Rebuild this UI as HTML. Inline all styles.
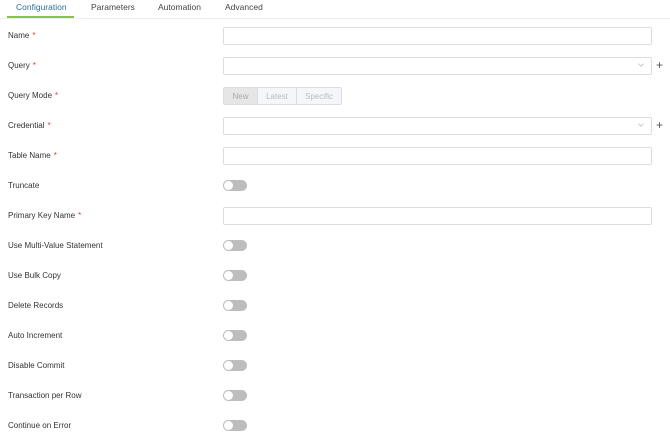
<!DOCTYPE html>
<html><head><style>
body{margin:0;width:670px;height:432px;background:#fff;font-family:"Liberation Sans",sans-serif;font-size:8px;color:#333;position:relative;overflow:hidden}
.tabs{position:absolute;left:0;top:0;width:670px;height:18px;border-bottom:1px solid #eee}
.tab{position:absolute;top:2px;font-size:8.5px;color:#444}
.ul{position:absolute;left:7px;top:16px;width:67px;height:2px;background:#8bc34a}
.lbl{position:absolute;left:8px;font-size:8px;color:#333}
.req{color:#e53935;margin-left:3px}
.inp{position:absolute;left:223px;width:427px;height:16px;border:1px solid #ddd;border-radius:2px}
.chev{position:absolute;right:8px;top:4px;width:3px;height:3px;border-right:1px solid #ccc;border-bottom:1px solid #ccc;transform:rotate(45deg)}
.plus{position:absolute;left:656px;font-size:12px;color:#555;line-height:12px}
.tg{position:absolute;left:223px;width:24px;height:11px;border-radius:6px;background:#bdbdbd}
.tg::after{content:"";position:absolute;left:1px;top:1px;width:9px;height:9px;border-radius:50%;background:#fff}
.seg{position:absolute;left:223px;top:87px;height:16px;border:1px solid #ddd;border-radius:2px;display:flex;font-size:8px;color:#bbb}
.seg div{display:flex;align-items:center;justify-content:center;border-right:1px solid #ddd;background:#f4f6f9}
</style></head><body>
<div class="tabs">
<div class="tab" style="left:16px;color:#2f6fa8">Configuration</div>
<div class="tab" style="left:91px">Parameters</div>
<div class="tab" style="left:158px">Automation</div>
<div class="tab" style="left:225px">Advanced</div>
<div class="ul"></div>
</div>
<div class="lbl" style="top:31px">Name<span class="req">*</span></div>
<div class="inp" style="top:27px"></div>
<div class="lbl" style="top:61px">Query<span class="req">*</span></div>
<div class="inp" style="top:57px"><div class="chev"></div></div><div class="plus" style="top:59px">+</div>
<div class="lbl" style="top:91px">Query Mode<span class="req">*</span></div>
<div class="seg"><div style="width:33px;background:#e6e6e6;color:#aaa">New</div><div style="width:38px">Latest</div><div style="width:44px;border-right:0">Specific</div></div>
<div class="lbl" style="top:121px">Credential<span class="req">*</span></div>
<div class="inp" style="top:117px"><div class="chev"></div></div><div class="plus" style="top:119px">+</div>
<div class="lbl" style="top:151px">Table Name<span class="req">*</span></div>
<div class="inp" style="top:147px"></div>
<div class="lbl" style="top:181px">Truncate</div><div class="tg" style="top:180px"></div>
<div class="lbl" style="top:211px">Primary Key Name<span class="req">*</span></div>
<div class="inp" style="top:207px"></div>
<div class="lbl" style="top:241px">Use Multi-Value Statement</div><div class="tg" style="top:240px"></div>
<div class="lbl" style="top:271px">Use Bulk Copy</div><div class="tg" style="top:270px"></div>
<div class="lbl" style="top:301px">Delete Records</div><div class="tg" style="top:300px"></div>
<div class="lbl" style="top:331px">Auto Increment</div><div class="tg" style="top:330px"></div>
<div class="lbl" style="top:361px">Disable Commit</div><div class="tg" style="top:360px"></div>
<div class="lbl" style="top:391px">Transaction per Row</div><div class="tg" style="top:390px"></div>
<div class="lbl" style="top:421px">Continue on Error</div><div class="tg" style="top:420px"></div>
</body></html>
